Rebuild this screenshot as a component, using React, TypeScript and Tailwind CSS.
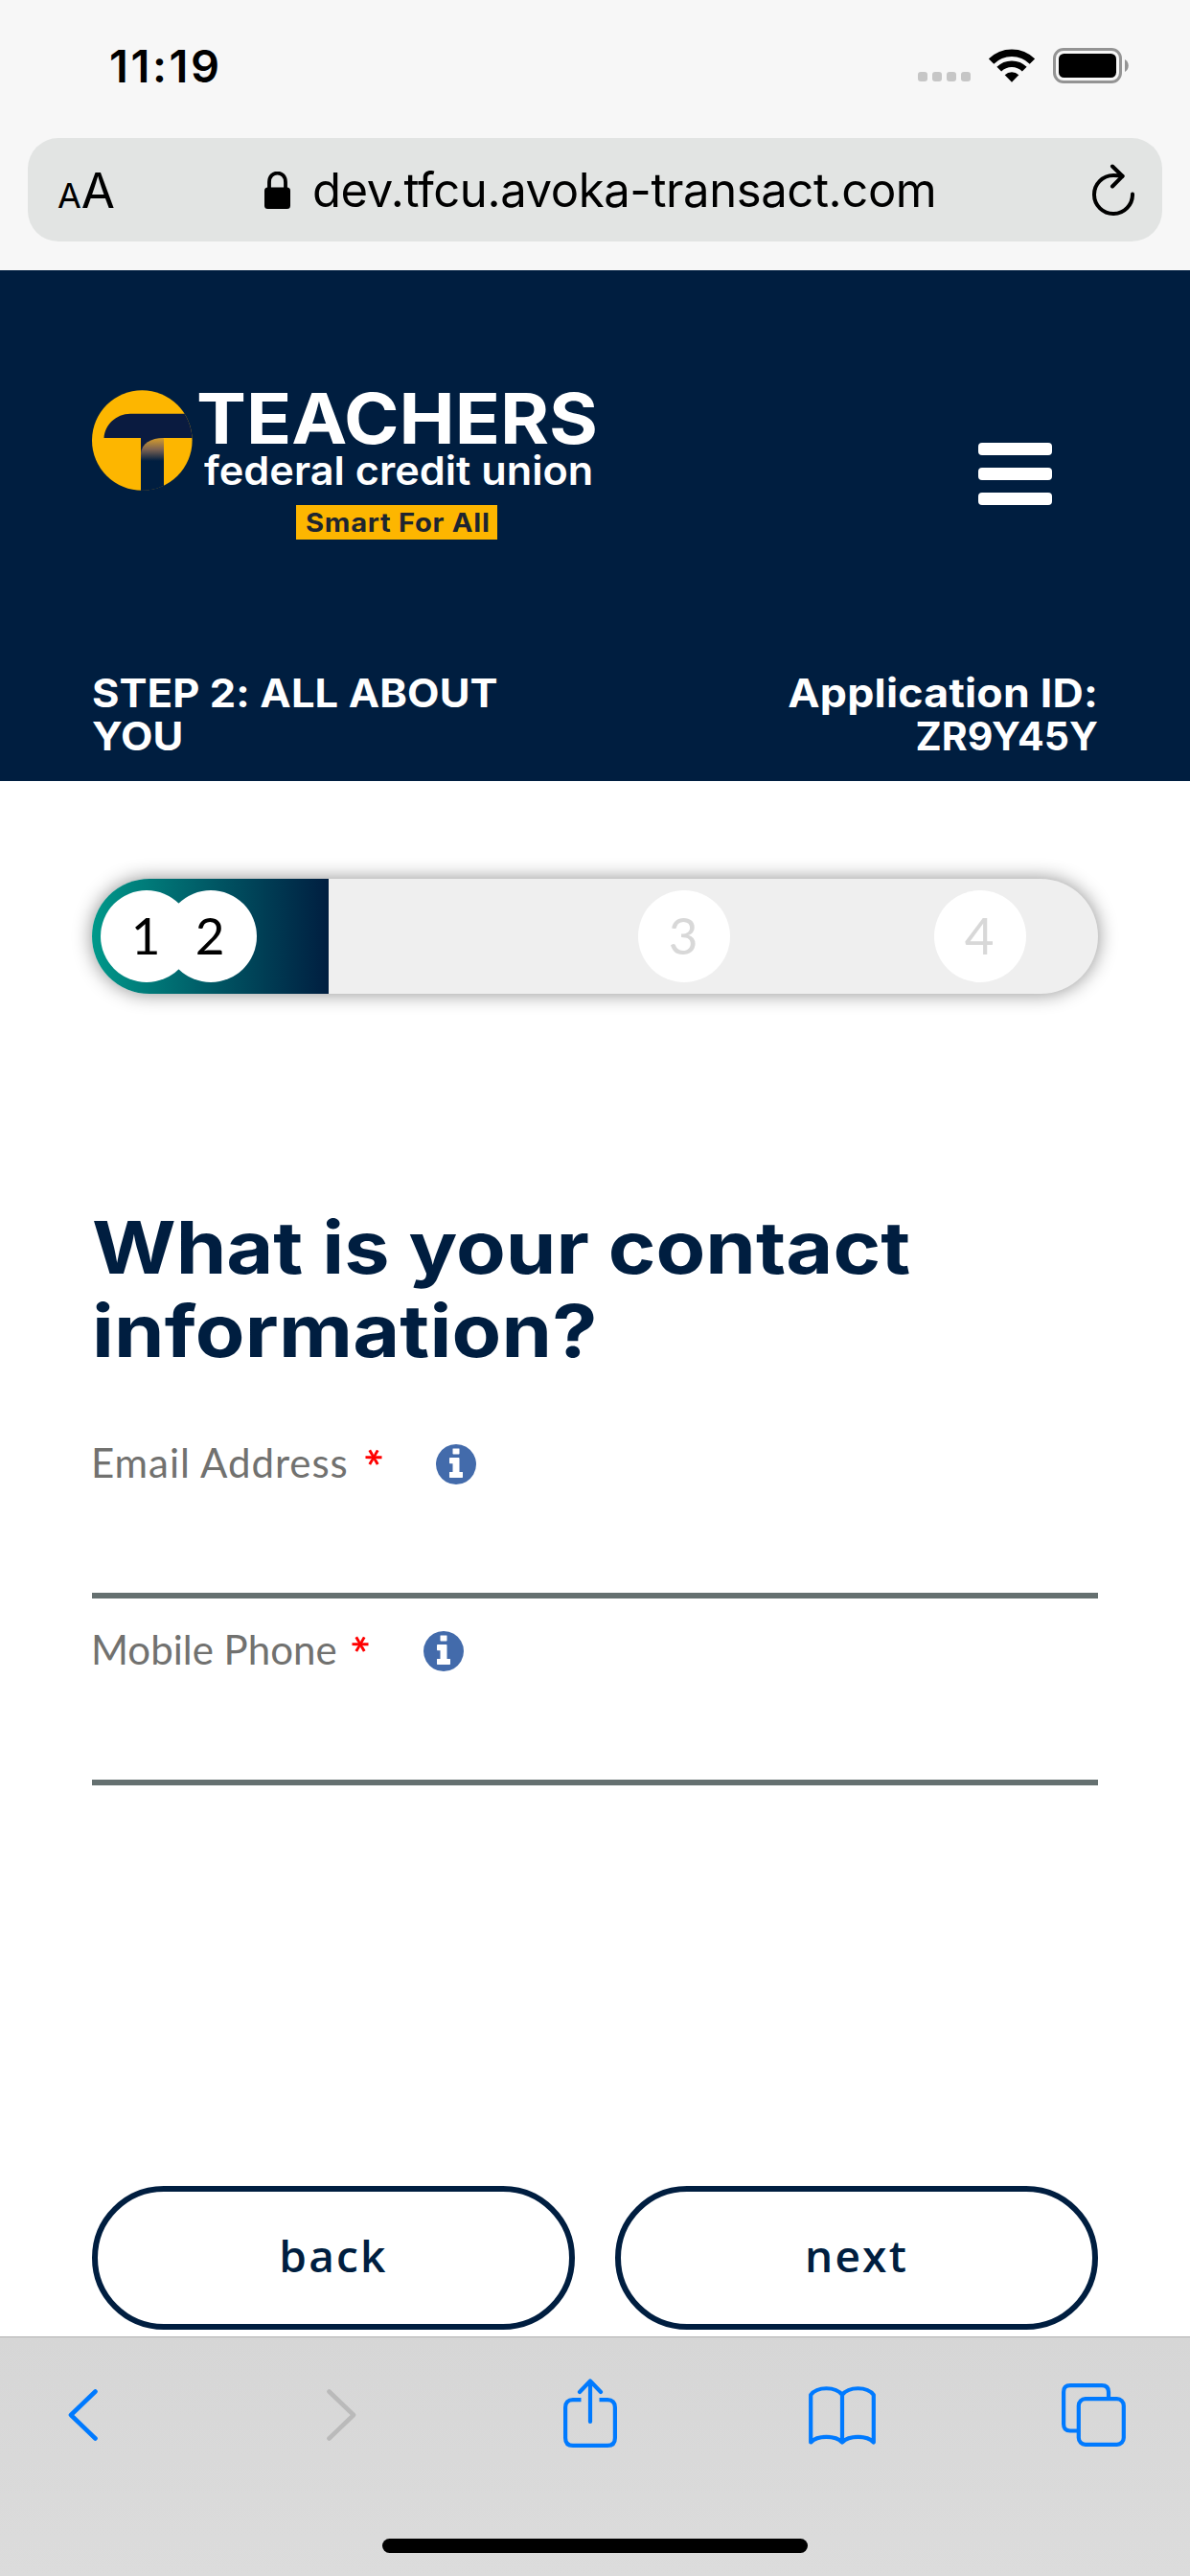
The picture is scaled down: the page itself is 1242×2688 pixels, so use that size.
import type { ReactNode } from "react";

function StatusBar() {
  return (
    <div className="flex h-[136px] items-center pr-16 pl-[114px]">
      <span className="text-[47px] leading-none font-semibold tracking-[2.6px]">11:19</span>
      <div className="ml-auto flex items-center">
        <div className="mt-[24px] mr-[19px] flex gap-[5px]">
          {[0, 1, 2, 3].map((i) => (
            <span key={i} className="size-[10px] rounded-[3px] bg-[#c6c6c6]" />
          ))}
        </div>
        <svg className="mr-[19px] h-[37px] w-[48px]" viewBox="0 0 50 37" fill="none" stroke="#000">
          <path d="M2.7 13.9 A31.6 31.6 0 0 1 47.3 13.9" strokeWidth="8" />
          <path d="M11.2 22.4 A19.5 19.5 0 0 1 38.8 22.4" strokeWidth="7" />
          <path d="M25 36.5 L17.4 28.6 A11 11 0 0 1 32.6 28.6 Z" fill="#000" stroke="none" />
        </svg>
        <svg className="h-[37px] w-[79px]" viewBox="0 0 79 37">
          <rect x="1.5" y="1.5" width="69" height="34" rx="9.5" fill="none" stroke="#949494" strokeWidth="3" />
          <rect x="6" y="6" width="60" height="25" rx="5.5" />
          <path d="M75 12 C80 14.5 80 22.5 75 25 Z" fill="#949494" />
        </svg>
      </div>
    </div>
  );
}

function AddressBar() {
  return (
    <div className="mx-[29px] mt-2 flex h-[108px] items-center rounded-[32px] bg-[#e2e4e3] pr-[29px] pl-[31px]">
      <div className="flex w-[216px] items-baseline leading-none">
        <span className="text-[36px]">A</span>
        <span className="text-[51px] tracking-[-1px]">A</span>
      </div>
      <svg className="h-[39px] w-[27px]" viewBox="0 0 27 39">
        <rect y="16.5" width="27" height="22.5" rx="3.5" />
        <path d="M5 18 V11 C5 -1.5 22 -1.5 22 11 V18" fill="none" stroke="#000" strokeWidth="3.8" />
      </svg>
      <span className="ml-[23px] text-[49px] leading-none tracking-[-0.4px] whitespace-nowrap">
        dev.tfcu.avoka-transact.com
      </span>
      <svg className="ml-auto h-[54px] w-[44px]" viewBox="0 0 44 54" fill="none" stroke="#000" strokeWidth="4" strokeLinecap="round" strokeLinejoin="round">
        <path d="M42 31.5 A20 20 0 1 1 22 12 Q27 12 31.5 12.8" />
        <path d="M21 2.5 L31.5 12.8 L21 23.5" />
      </svg>
    </div>
  );
}

function Logo() {
  return (
    <div className="flex gap-1 text-white">
      <svg className="size-[105px]" viewBox="0 0 105 105">
        <defs>
          <clipPath id="disc">
            <circle cx="52.3" cy="52.5" r="52.3" />
          </clipPath>
          <linearGradient id="fold" x1="0" y1="50" x2="0" y2="74" gradientUnits="userSpaceOnUse">
            <stop offset="0" stopColor="#d79e2b" />
            <stop offset="0.5" stopColor="#7b6252" />
            <stop offset="1" stopColor="#001e40" />
          </linearGradient>
        </defs>
        <g clipPath="url(#disc)">
          <rect width="105" height="105" fill="#fdb600" />
          <path d="M12.5 50 C13.5 36 25 25 40 24.7 H105 V50 H75 V105 H51 V50 Z" fill="#0a1b40" />
          <path d="M51 105 V66 C52 56 61 50 75 50 V105 Z" fill="url(#fold)" />
        </g>
      </svg>
      <div className="flex w-[420px] flex-col items-start whitespace-nowrap">
        <span className="origin-left scale-x-[1.066] text-[73px] leading-[60px] font-bold">TEACHERS</span>
        <span className="-mt-px ml-2 origin-left scale-x-[1.055] text-[41px] leading-[50px] font-semibold">
          federal credit union
        </span>
        <div className="mt-[11px] ml-[104px] flex h-9 w-[210px] items-center bg-[#fdb600] pl-[10px]">
          <span className="origin-left scale-x-[1.08] text-[27px] leading-none font-bold tracking-[0.67px] text-[#1d2530]">
            Smart For All
          </span>
        </div>
      </div>
    </div>
  );
}

function SiteHeader() {
  return (
    <header className="h-[533px] bg-[#001e40] px-24 pt-[125px]">
      <div className="flex h-[156px] justify-between">
        <Logo />
        <div className="mt-[55px] mr-12 flex h-[65px] w-[77px] flex-col justify-between">
          <span className="h-[13px] rounded-[4px] bg-white" />
          <span className="h-[13px] rounded-[4px] bg-white" />
          <span className="h-[13px] rounded-[4px] bg-white" />
        </div>
      </div>
      <div className="mt-[138px] flex justify-between text-[41px] leading-[45px] font-bold whitespace-nowrap text-white">
        <div className="flex flex-col items-start">
          <span className="origin-left scale-x-[1.06] tracking-[0.1px]">STEP 2: ALL ABOUT</span>
          <span className="origin-left scale-x-[1.06]">YOU</span>
        </div>
        <div className="flex flex-col items-end">
          <span className="origin-right scale-x-[1.09] tracking-[0.2px]">Application ID:</span>
          <span>ZR9Y45Y</span>
        </div>
      </div>
    </header>
  );
}

function Step({ className, children }: { className: string; children: ReactNode }) {
  return (
    <span className={`flex size-24 shrink-0 items-center justify-center rounded-full bg-white pr-[2px] pb-[4px] font-[Lato,sans-serif] text-[53px] leading-none ${className}`}>
      {children}
    </span>
  );
}

function Progress() {
  return (
    <div className="mt-[102px] flex h-[120px] items-center rounded-full bg-[#efefef] shadow-[0_0_20px_rgba(0,0,0,0.45)]">
      <div className="flex h-full w-[247px] items-center rounded-l-full rounded-r-[4px] bg-linear-to-r from-[#00998a] to-[#001e40] pl-[9px]">
        <Step className="text-black">1</Step>
        <Step className="-ml-[29px] text-black">2</Step>
      </div>
      <Step className="ml-[323px] text-[#d8d8d8]">3</Step>
      <Step className="ml-[213px] text-[#d8d8d8]">4</Step>
    </div>
  );
}

function Field({ label, labelClass, starClass, iconClass }: { label: string; labelClass: string; starClass: string; iconClass: string }) {
  return (
    <div className="h-[170px] border-b-[6px] border-[#657070]">
      <div className="-ml-px flex h-14 items-center font-[Lato,sans-serif] text-[42px] leading-[56px] text-[#71716f]">
        <span className={labelClass}>{label}</span>
        <span className={`mt-2 h-[50px] w-[21px] origin-[11px_14px] -rotate-30 self-start text-[50px] leading-[50px] font-bold text-[#f00] ${starClass}`}>
          *
        </span>
        <svg className={`mt-1 size-[42px] ${iconClass}`} viewBox="128 128 1536 1536" fill="#436bab">
          <path d="M1152 1376v-160q0-14-9-23t-23-9h-96v-512q0-14-9-23t-23-9h-320q-14 0-23 9t-9 23v160q0 14 9 23t23 9h96v320h-96q-14 0-23 9t-9 23v160q0 14 9 23t23 9h448q14 0 23-9t9-23zM1024 480v-160q0-14-9-23t-23-9h-192q-14 0-23 9t-9 23v160q0 14 9 23t23 9h192q14 0 23-9t9-23zM1664 896q0 209-103 385.5T1281.5 1561 896 1664t-385.5-103T231 1281.5 128 896t103-385.5T510.5 231 896 128t385.5 103T1561 510.5 1664 896z" />
        </svg>
      </div>
    </div>
  );
}

function PillButton({ children }: { children: ReactNode }) {
  return (
    <button className="flex h-[150px] w-[504px] items-center justify-center rounded-full border-[6px] border-[#001e40] bg-white pb-[6px] font-['Open_Sans',sans-serif] text-[46px] leading-none font-semibold tracking-[2.2px] text-[#001e40]">
      {children}
    </button>
  );
}

function Toolbar() {
  return (
    <nav className="mt-[7px] h-[250px] border-t border-[#b0b0b0] bg-linear-to-b from-[#d6d6d6] to-[#dcdcdc]">
      <div className="flex h-[162px] items-center pl-[71px] text-[#007aff]">
        <svg className="h-[54px] w-[31px]" viewBox="0 0 31 54" fill="none" stroke="currentColor" strokeWidth="4.6" strokeLinecap="round" strokeLinejoin="round">
          <path d="M28.5 2.5 L3 27 L28.5 51.5" />
        </svg>
        <svg className="ml-[239px] h-[54px] w-[31px] text-[#bababa]" viewBox="0 0 31 54" fill="none" stroke="currentColor" strokeWidth="4.6" strokeLinecap="round" strokeLinejoin="round">
          <path d="M2.5 2.5 L28 27 L2.5 51.5" />
        </svg>
        <svg className="-mt-1 ml-[216px] h-[72px] w-[56px]" viewBox="0 0 56 72" fill="none" stroke="currentColor" strokeWidth="4.2" strokeLinecap="round" strokeLinejoin="round">
          <path d="M18.5 22.2 H10 Q2.1 22.2 2.1 30 V62 Q2.1 69.9 10 69.9 H46 Q53.9 69.9 53.9 62 V30 Q53.9 22.2 46 22.2 H37.5" strokeLinecap="butt" />
          <path d="M28 45 V2.5 M17 14 L28 2.5 L39 14" />
        </svg>
        <svg className="ml-[200px] h-[61px] w-[70px]" viewBox="0 0 70 61" fill="none" stroke="currentColor" strokeWidth="4.2" strokeLinecap="round" strokeLinejoin="round">
          <path d="M35 9 C28 0 9 0 2.2 9 V58.5 C9 51 28 51 35 58.5 C42 51 61 51 67.8 58.5 V9 C61 0 42 0 35 9 V58.5" />
        </svg>
        <svg className="ml-[194px] h-[66px] w-[67px]" viewBox="0 0 67 66" fill="none" stroke="currentColor" strokeWidth="4.2">
          <path d="M17 49.5 H9 Q2.1 49.5 2.1 42.5 V9 Q2.1 2.1 9 2.1 H42 Q49 2.1 49 9 V16" />
          <rect x="17.8" y="16.2" width="47" height="47.6" rx="7" />
        </svg>
      </div>
      <div className="mx-auto mt-12 h-[15px] w-[444px] rounded-full bg-black" />
    </nav>
  );
}

export default function App() {
  return (
    <div className="h-[2688px] w-[1242px] overflow-hidden bg-white font-[Inter,sans-serif] text-black">
      <div className="h-[282px] bg-[#f7f7f7]">
        <StatusBar />
        <AddressBar />
      </div>
      <SiteHeader />
      <main className="px-24">
        <Progress />
        <h1 className="mt-[221px] flex flex-col items-start text-[76px] leading-[87px] font-bold whitespace-nowrap text-[#001e40]">
          <span className="origin-left scale-x-[1.112]">What is your contact</span>
          <span className="origin-left scale-x-[1.11] tracking-[0.2px]">information?</span>
        </h1>
        <form className="mt-[66px] flex flex-col gap-[25px]">
          <Field label="Email Address" labelClass="tracking-[0.95px]" starClass="ml-[15px]" iconClass="ml-[55px]" />
          <Field label="Mobile Phone" labelClass="" starClass="ml-[13px]" iconClass="ml-[56px]" />
        </form>
        <div className="mt-[418px] flex justify-between">
          <PillButton>back</PillButton>
          <PillButton>next</PillButton>
        </div>
      </main>
      <Toolbar />
    </div>
  );
}
